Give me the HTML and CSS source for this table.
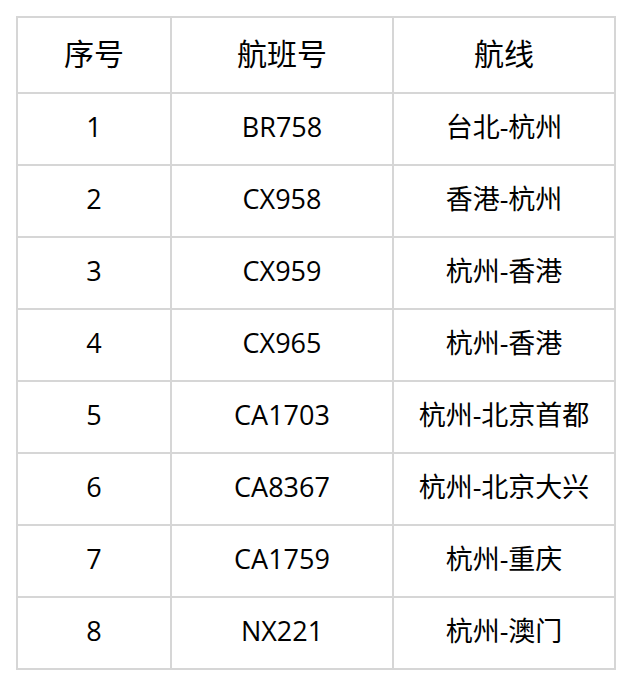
FILE: index.html
```html
<!DOCTYPE html>
<html lang="zh">
<head>
<meta charset="utf-8">
<link rel="stylesheet" href="styles.css">
</head>
<body>
<table class="flights">
  <colgroup><col class="c1"><col class="c2"><col class="c3"></colgroup>
  <thead>
    <tr><th>序号</th><th>航班号</th><th>航线</th></tr>
  </thead>
  <tbody>
    <tr><td>1</td><td>BR758</td><td>台北-杭州</td></tr>
    <tr><td>2</td><td>CX958</td><td>香港-杭州</td></tr>
    <tr><td>3</td><td>CX959</td><td>杭州-香港</td></tr>
    <tr><td>4</td><td>CX965</td><td>杭州-香港</td></tr>
    <tr><td>5</td><td>CA1703</td><td>杭州-北京首都</td></tr>
    <tr><td>6</td><td>CA8367</td><td>杭州-北京大兴</td></tr>
    <tr><td>7</td><td>CA1759</td><td>杭州-重庆</td></tr>
    <tr><td>8</td><td>NX221</td><td>杭州-澳门</td></tr>
  </tbody>
</table>
</body>
</html>
```
FILE: styles.css
```css
html, body {
  margin: 0;
  padding: 0;
  background: #ffffff;
}
body {
  padding: 16px;
  font-family: "Open Sans", "Noto Sans CJK SC", sans-serif;
  color: #000000;
}
.flights {
  border-collapse: collapse;
  width: 598px;
  table-layout: fixed;
  font-size: 27px;
  line-height: 1.2;
}
.c1 { width: 154px; }
.c2 { width: 222px; }
.c3 { width: 222px; }
.flights th,
.flights td {
  border: 2px solid #d6d6d6;
  text-align: center;
  vertical-align: middle;
  padding: 0 0 4px 0;
  font-weight: normal;
}
.flights th {
  font-size: 30px;
  padding-bottom: 2px;
}
.flights thead tr { height: 76px; }
.flights tbody tr { height: 72px; }
```
